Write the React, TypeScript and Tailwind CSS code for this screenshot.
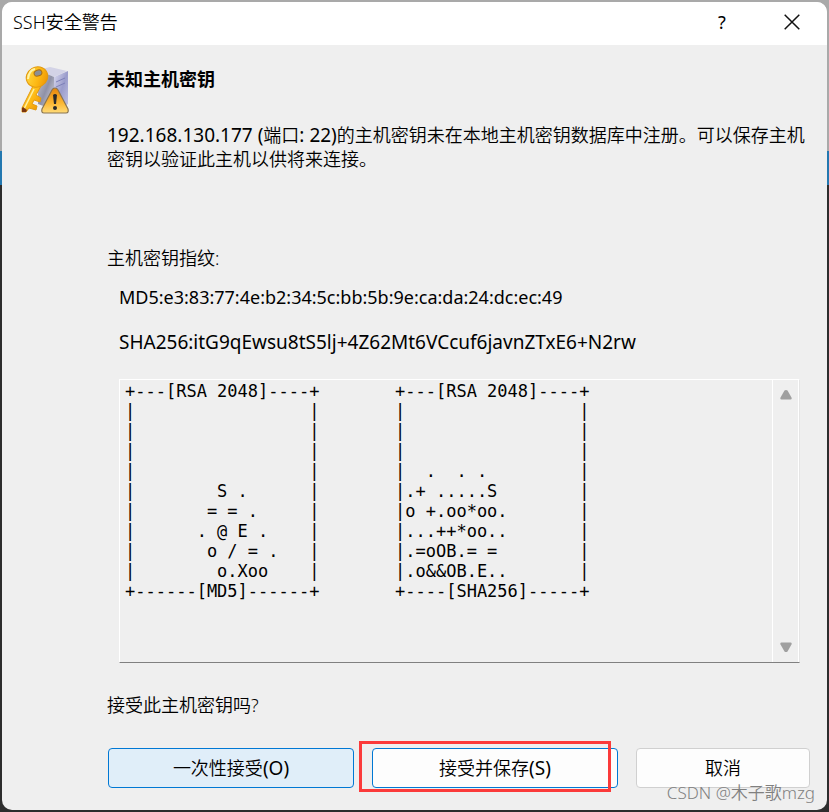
import type { ReactNode } from "react";

const MD5_ART = [
  "+---[RSA 2048]----+",
  "|                 |",
  "|                 |",
  "|                 |",
  "|                 |",
  "|        S .      |",
  "|       = = .     |",
  "|      . @ E .    |",
  "|       o / = .   |",
  "|        o.Xoo    |",
  "+------[MD5]------+",
].join("\n");

const SHA_ART = [
  "+---[RSA 2048]----+",
  "|                 |",
  "|                 |",
  "|                 |",
  "|  .  . .         |",
  "|.+ .....S        |",
  "|o +.oo*oo.       |",
  "|...++*oo..       |",
  "|.=oOB.= =        |",
  "|.o&&OB.E..       |",
  "+----[SHA256]-----+",
].join("\n");

function KeyServerIcon() {
  return (
    <svg width="52" height="52" viewBox="0 0 52 52" aria-hidden="true" className="shrink-0">
      <defs>
        <linearGradient id="front" x1="0" y1="0" x2="1" y2="1">
          <stop offset="0" stopColor="#c9cad4" />
          <stop offset="0.5" stopColor="#8f91a6" />
          <stop offset="1" stopColor="#e4e4ee" />
        </linearGradient>
        <linearGradient id="side" x1="0" y1="0" x2="1" y2="1">
          <stop offset="0" stopColor="#dcdcf0" />
          <stop offset="0.5" stopColor="#9a9ccb" />
          <stop offset="1" stopColor="#c4c6e6" />
        </linearGradient>
        <linearGradient id="gold" x1="0" y1="0" x2="1" y2="1">
          <stop offset="0" stopColor="#ffdf4a" />
          <stop offset="0.55" stopColor="#fdb813" />
          <stop offset="1" stopColor="#e88a00" />
        </linearGradient>
        <linearGradient id="warn" x1="0" y1="0" x2="0" y2="1">
          <stop offset="0" stopColor="#e8850a" />
          <stop offset="0.6" stopColor="#fbb733" />
          <stop offset="1" stopColor="#ffdc7a" />
        </linearGradient>
      </defs>
      <path d="M18 5 30 2l17 4-13 6z" fill="#d3d3e6" />
      <path d="M18 5l16 7v33l-16-6z" fill="url(#front)" />
      <path d="M34 12 48 6v33l-14 8z" fill="url(#side)" />
      <path d="M36 17l9-4M36 22l9-4" stroke="#7c7fb8" strokeWidth="1" fill="none" />
      <path
        d="M14 19 2 43v4h4l3-4 7 2 1-4-5-2 2-4 6 2 1-4-5-3 5-9z"
        fill="url(#gold)"
        stroke="#e39a10"
        strokeWidth="1"
      />
      <path d="M14 24 4 44" stroke="#fff0a0" strokeWidth="1.5" />
      <path d="M2 43v4h4l1-2-4-3z" fill="#7a3510" />
      <ellipse cx="17" cy="12" rx="11" ry="10" transform="rotate(-30 17 12)" fill="url(#gold)" stroke="#e39a10" />
      <ellipse cx="18" cy="8" rx="4" ry="3" transform="rotate(-20 18 8)" fill="#8b8f96" stroke="#a86d12" />
      <path d="M8 14q1-9 7-10" stroke="#fff3a6" strokeWidth="2" fill="none" />
      <path
        d="M35 23q-2 0-3 2L22 44q-1 4 2 4h22q3 0 2-4L38 25q-1-2-3-2z"
        fill="url(#warn)"
        stroke="#8a7550"
        strokeWidth="1.2"
      />
      <path d="M33 30q2-2 4 0l-1 9h-2z" fill="#2a2a2a" />
      <circle cx="35" cy="43" r="2" fill="#2a2a2a" />
    </svg>
  );
}

function Latin({ children }: { children: ReactNode }) {
  return <span className="text-[19px] font-normal">{children}</span>;
}

export default function App() {
  return (
    <div className="relative flex min-h-screen bg-[linear-gradient(to_bottom,#a9a9a9_0_151px,#2378b0_151px_185px,#2d2d2d_185px)] p-[2px] font-['Noto_Sans','Noto_Sans_CJK_SC',sans-serif] text-[18px] font-[350] leading-6 text-black">
      <div role="dialog" aria-labelledby="title" className="flex flex-1 flex-col overflow-hidden rounded-[10px] bg-[#efefef]">
        <header className="flex h-[43px] items-center bg-white pb-[3px] pl-[11px] pr-[14px]">
          <h1 id="title" className="flex-1 font-[350]">SSH安全警告</h1>
          <button type="button" aria-label="Help" className="flex h-10 w-[42px] items-center justify-center font-normal">?</button>
          <button type="button" aria-label="Close" className="ml-7 flex h-10 w-[42px] items-center justify-center">
            <svg width="16" height="16" viewBox="0 0 16 16" fill="none" stroke="#111" strokeWidth="1.5">
              <path d="M.7.7l14.6 14.6M15.3.7.7 15.3" />
            </svg>
          </button>
        </header>

        <main className="flex flex-1 pl-[18px] pr-[17px] pt-[20px]">
          <KeyServerIcon />
          <div className="ml-[35px] flex-1">
            <h2 className="mt-[2px] font-bold">未知主机密钥</h2>
            <p className="mt-8 min-h-[99px]">
              <Latin>192.168.130.177 (</Latin>端口<Latin>: 22)</Latin>
              的主机密钥未在本地主机密钥数据库中注册。可以保存主机密钥以验证此主机以供将来连接。
            </p>

            <p className="mt-6">主机密钥指纹:</p>
            <p className="ml-3 mt-[15px] text-[18px] font-normal">MD5:e3:83:77:4e:b2:34:5c:bb:5b:9e:ca:da:24:dc:ec:49</p>
            <p className="ml-3 mt-[21px] text-[19px] font-normal">SHA256:itG9qEwsu8tS5lj+4Z62Mt6VCcuf6javnZTxE6+N2rw</p>

            <div className="ml-3 mr-[10px] mt-[25px] flex h-[284px] border border-white border-b-[#808080] border-r-[#e5e5e5]">
              <div className="flex flex-1 gap-20 overflow-hidden pl-[5px] pt-px font-['DejaVu_Sans_Mono',monospace] text-[17px] leading-5">
                <pre className="w-[190px] font-[inherit]">{MD5_ART}</pre>
                <pre className="w-[190px] font-[inherit]">{SHA_ART}</pre>
              </div>
              <div className="flex w-[27px] flex-col items-center justify-between border-x border-white py-[10px]">
                <button type="button" aria-label="Scroll up">
                  <svg width="12" height="10" viewBox="0 0 12 10" className="block" fill="#a0a0a0">
                    <path d="M6 0q1 0 1.500.6L11.500 7.500Q12.200 9.300 10.500 9.500h-9Q-.2 9.300.5 7.500L4.500.6Q5 0 6 0z" />
                  </svg>
                </button>
                <button type="button" aria-label="Scroll down" className="rotate-180">
                  <svg width="12" height="10" viewBox="0 0 12 10" className="block" fill="#a0a0a0">
                    <path d="M6 0q1 0 1.500.6L11.500 7.500Q12.200 9.300 10.500 9.500h-9Q-.2 9.300.5 7.500L4.500.6Q5 0 6 0z" />
                  </svg>
                </button>
              </div>
            </div>

            <p className="mt-[30px]">接受此主机密钥吗?</p>

            <div className="mb-[22px] mt-[31px] grid grid-cols-[246fr_246fr_174fr] gap-[18px] pl-px">
              <button type="button" className="h-10 rounded-[4px] border border-[#0078d4] bg-[#e0eef9]">
                一次性接受<Latin>(O)</Latin>
              </button>
              <div className="relative">
                <button type="button" className="h-10 w-full rounded-[4px] border border-[#0078d4] bg-[#fdfdfd]">
                  接受并保存<Latin>(S)</Latin>
                </button>
                <div className="pointer-events-none absolute -bottom-1 -left-[13px] -top-[7px] right-[7px] border-[3px] border-[#fb3a3a]" />
              </div>
              <button type="button" className="h-10 rounded-[4px] border border-[#d0d0d0] bg-[#fdfdfd]">取消</button>
            </div>
          </div>
        </main>
      </div>
      <div className="pointer-events-none absolute bottom-[7px] right-[14px] text-[17px] text-[#808080]">CSDN @木子歌mzg</div>
    </div>
  );
}
